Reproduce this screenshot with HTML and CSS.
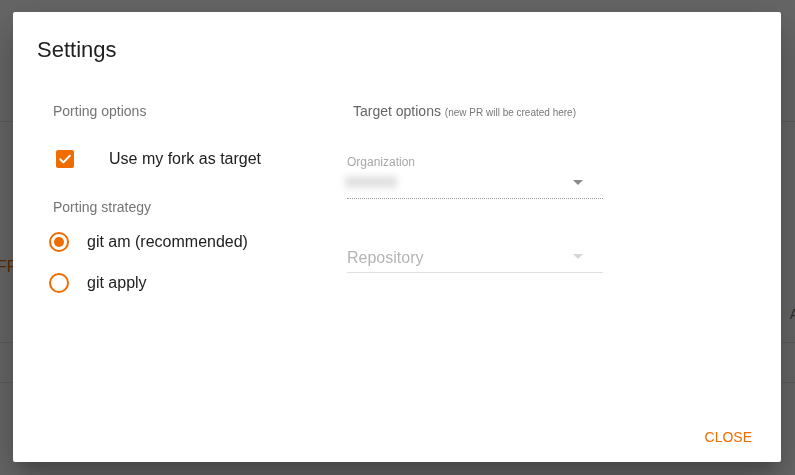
FILE: index.html
```html
<!DOCTYPE html>
<html>
<head>
    <title>Settings</title>
    <link rel="stylesheet" href="styles.css">
</head>
<body>

    <div class="page">
        <div class="page-top"></div>
        <div class="page-body">
            <div class="page-line"><span class="page-link">FR</span></div>
            <div class="page-line page-line-right"><span class="page-mark">A</span></div>
        </div>
        <div class="page-row"></div>
    </div>

    <div class="backdrop">
        <div class="dialog">
            <h2 class="dialog-title">Settings</h2>

            <div class="dialog-body">
                <div class="col-left">
                    <div class="section-label">Porting options</div>

                    <label class="check-row">
                        <span class="checkbox">
                            <svg width="18" height="18" viewBox="0 0 18 18">
                                <path d="M4.2 9.3 L7.4 12.4 L13.8 5.8" fill="none" stroke="#fff" stroke-width="2" stroke-linecap="round" stroke-linejoin="round"/>
                            </svg>
                        </span>
                        <span class="check-text">Use my fork as target</span>
                    </label>

                    <div class="section-label strategy-label">Porting strategy</div>

                    <label class="radio-row radio-first">
                        <span class="radio radio-on"></span>
                        <span class="radio-text">git am (recommended)</span>
                    </label>
                    <label class="radio-row radio-second">
                        <span class="radio"></span>
                        <span class="radio-text">git apply</span>
                    </label>
                </div>

                <div class="col-right">
                    <div class="section-label target-label">Target options <small>(new PR will be created here)</small></div>

                    <div class="field-label">Organization</div>
                    <div class="select select-disabled">
                        <span class="blurred-value"></span>
                        <span class="arrow"></span>
                    </div>

                    <div class="select select-repo">
                        <span class="placeholder">Repository</span>
                        <span class="arrow arrow-light"></span>
                    </div>
                </div>
            </div>

            <div class="dialog-actions">
                <button class="close-button">CLOSE</button>
            </div>
        </div>
    </div>

</body>
</html>
```

FILE: styles.css
```css
html, body {
    height: 100%;
}

body {
    margin: 0;
    font-family: "Liberation Sans", Arial, sans-serif;
    background: #fff;
    overflow: hidden;
}

/* page behind the dialog */
.page {
    height: 100%;
}

.page-top {
    height: 121px;
    border-bottom: 1px solid #e4e4e4;
}

.page-body {
    height: 221px;
    border-bottom: 1px solid #e4e4e4;
    padding-top: 136px;
    box-sizing: border-box;
}

.page-line {
    height: 18px;
}

.page-line-right {
    display: flex;
    justify-content: flex-end;
    margin-top: 30px;
}

.page-link {
    display: inline-block;
    margin-left: -3px;
    color: #ef6c00;
    font-size: 16px;
}

.page-mark {
    color: #777;
    font-size: 14px;
    margin-right: -4px;
}

.page-row {
    height: 39px;
    border-bottom: 1px solid #e4e4e4;
}

/* dialog */
.backdrop {
    position: fixed;
    inset: 0;
    background: rgba(0, 0, 0, 0.6);
    display: flex;
    align-items: flex-start;
    justify-content: flex-start;
    padding: 12px 0 0 13px;
}

.dialog {
    width: 768px;
    height: 450px;
    background: #fff;
    border-radius: 2px;
    box-shadow: 0 11px 15px -7px rgba(0, 0, 0, 0.2), 0 24px 38px 3px rgba(0, 0, 0, 0.14), 0 9px 46px 8px rgba(0, 0, 0, 0.12);
    display: flex;
    flex-direction: column;
    box-sizing: border-box;
    padding: 24px 0 7px 24px;
}

.dialog-title {
    margin: 0;
    font-size: 22px;
    font-weight: normal;
    line-height: 28px;
    color: #212121;
}

.dialog-body {
    display: flex;
    padding-left: 16px;
    margin-top: 37px;
}

.col-left {
    width: 294px;
}

.col-right {
    width: 256px;
}

.section-label {
    font-size: 14px;
    line-height: 20px;
    color: #757575;
}

.target-label {
    padding-left: 6px;
    color: #666;
}

.target-label small {
    font-size: 10px;
    color: #777;
}

.check-row {
    display: flex;
    align-items: center;
    height: 20px;
    margin-top: 28px;
}

.checkbox {
    width: 18px;
    height: 18px;
    margin-left: 3px;
    border-radius: 2px;
    background: #ef6c00;
    display: flex;
}

.check-text {
    margin-left: 35px;
    font-size: 16px;
    color: #212121;
}

.strategy-label {
    margin-top: 28px;
}

.radio-row {
    display: flex;
    align-items: center;
    height: 20px;
}

.radio-first {
    margin-top: 15px;
}

.radio-second {
    margin-top: 21px;
}

.radio {
    width: 20px;
    height: 20px;
    margin-left: -4px;
    border: 2px solid #ef6c00;
    border-radius: 50%;
    box-sizing: border-box;
    display: flex;
    align-items: center;
    justify-content: center;
}

.radio-on::after {
    content: "";
    width: 10px;
    height: 10px;
    border-radius: 50%;
    background: #ef6c00;
}

.radio-text {
    margin-left: 18px;
    font-size: 16px;
    color: #212121;
}

.field-label {
    margin-top: 32px;
    font-size: 12px;
    line-height: 14px;
    color: #a8a8a8;
}

.select {
    position: relative;
    height: 28px;
    display: flex;
    align-items: center;
    justify-content: space-between;
}

.select-disabled {
    height: 27px;
    margin-top: 2px;
    border-bottom: 1px dotted #9a9a9a;
    align-items: flex-start;
}

.blurred-value {
    width: 52px;
    height: 12px;
    margin: 5px 0 0 -2px;
    background: #e2e2e2;
    filter: blur(3px);
}

.select-disabled .arrow {
    margin-top: 9px;
}

.select-repo {
    margin-top: 45px;
    border-bottom: 1px solid #e0e0e0;
}

.placeholder {
    font-size: 16px;
    color: #b4b4b4;
}

.arrow {
    width: 0;
    height: 0;
    margin-right: 20px;
    border-left: 5px solid transparent;
    border-right: 5px solid transparent;
    border-top: 5px solid #8a8a8a;
}

.arrow-light {
    margin-bottom: 4px;
    border-top-color: #d6d6d6;
}

.dialog-actions {
    margin-top: auto;
    display: flex;
    justify-content: flex-end;
    padding-right: 21px;
}

.close-button {
    height: 36px;
    padding: 0 8px;
    border: none;
    background: none;
    font-family: "Liberation Sans", Arial, sans-serif;
    font-size: 14px;
    color: #ef6c00;
    cursor: pointer;
}
```
